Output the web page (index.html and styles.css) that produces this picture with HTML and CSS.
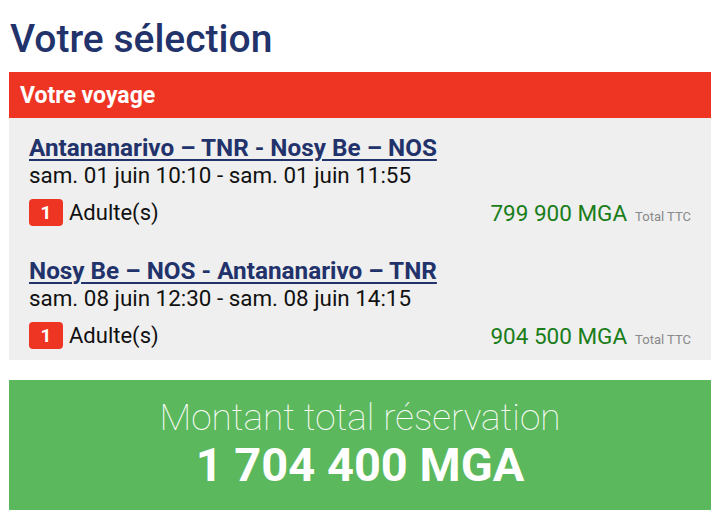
FILE: index.html
```html
<!DOCTYPE html>
<html lang="fr">
<head>
    <meta charset="UTF-8">
    <meta name="viewport" content="width=device-width, initial-scale=1.0">
    <title>Votre sélection</title>
    <link rel="stylesheet" href="styles.css">
</head>
<body>
    <div class="selection">
        <h1 class="page-title">Votre sélection</h1>

        <div class="trip-card">
            <div class="trip-header">Votre voyage</div>
            <div class="trip-body">
                <div class="segment">
                    <a href="#" class="segment-route">Antananarivo – TNR - Nosy Be – NOS</a>
                    <div class="segment-dates">sam. 01 juin 10:10 - sam. 01 juin 11:55</div>
                    <div class="segment-row">
                        <div class="pax">
                            <span class="pax-count">1</span>
                            <span class="pax-label">Adulte(s)</span>
                        </div>
                        <div class="price">
                            <span class="price-amount">799 900 MGA</span>
                            <span class="price-note">Total TTC</span>
                        </div>
                    </div>
                </div>

                <div class="segment">
                    <a href="#" class="segment-route">Nosy Be – NOS - Antananarivo – TNR</a>
                    <div class="segment-dates">sam. 08 juin 12:30 - sam. 08 juin 14:15</div>
                    <div class="segment-row">
                        <div class="pax">
                            <span class="pax-count">1</span>
                            <span class="pax-label">Adulte(s)</span>
                        </div>
                        <div class="price">
                            <span class="price-amount">904 500 MGA</span>
                            <span class="price-note">Total TTC</span>
                        </div>
                    </div>
                </div>
            </div>
        </div>

        <div class="total-box">
            <div class="total-label">Montant total réservation</div>
            <div class="total-amount">1 704 400 MGA</div>
        </div>
    </div>
</body>
</html>
```

FILE: styles.css
```css
* {
    margin: 0;
    padding: 0;
    box-sizing: border-box;
}

body {
    font-family: Roboto, "Liberation Sans", sans-serif;
    background: white;
    color: #111;
}

.selection {
    padding: 0 9px;
}

.page-title {
    font-size: 39px;
    font-weight: 500;
    color: #22326b;
    line-height: 46px;
    padding: 16px 0 10px 1px;
}

.trip-card {
    background: #efefef;
}

.trip-header {
    background: #ee3524;
    color: white;
    font-size: 23px;
    font-weight: 700;
    height: 46px;
    display: flex;
    align-items: center;
    padding: 0 11px;
}

.trip-body {
    padding: 16px 20px 11px 20px;
}

.segment {
    margin-bottom: 31px;
}

.segment:last-child {
    margin-bottom: 0;
}

.segment-route {
    display: inline-block;
    font-size: 24.3px;
    font-weight: 700;
    color: #22326b;
    text-decoration: underline;
    text-decoration-thickness: 2px;
    text-underline-offset: 3px;
    line-height: 28px;
}

.segment-dates {
    font-size: 22.4px;
    line-height: 27px;
}

.segment-row {
    display: flex;
    justify-content: space-between;
    align-items: center;
    margin-top: 10px;
}

.pax {
    display: flex;
    align-items: center;
    gap: 6px;
}

.pax-count {
    background: #ee3524;
    color: white;
    font-size: 19px;
    font-weight: 700;
    width: 34px;
    height: 27px;
    border-radius: 4px;
    display: flex;
    align-items: center;
    justify-content: center;
}

.pax-label {
    font-size: 22px;
    line-height: 26px;
}

.price {
    display: flex;
    align-items: baseline;
    gap: 8px;
}

.price-amount {
    font-size: 22.5px;
    color: #1a7d1a;
}

.price-note {
    font-size: 13px;
    color: #8a8a8a;
}

.total-box {
    margin-top: 20px;
    background: #5cb85c;
    color: white;
    text-align: center;
    height: 130px;
    padding-top: 18px;
}

.total-label {
    font-size: 37px;
    font-weight: 100;
    line-height: 40px;
}

.total-amount {
    font-size: 47px;
    font-weight: 700;
    line-height: 54px;
}
```
